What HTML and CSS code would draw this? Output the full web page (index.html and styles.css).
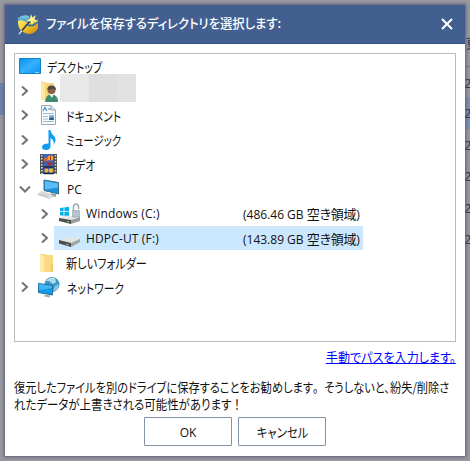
FILE: index.html
```html
<!DOCTYPE html>
<html lang="ja">
<head>
<meta charset="utf-8">
<title>ファイルを保存するディレクトリを選択します</title>
<link rel="stylesheet" href="styles.css">
</head>
<body>
<div class="backdrop">
  <div class="strip-left"></div>
  <div class="strip-right"><span class="peek head">更</span><span class="peek first">2</span><span class="peek lit">2</span><span class="peek">2</span><span class="peek">2</span><span class="peek">2</span><span class="peek">2</span></div>
</div>
<div class="dialog">
  <header class="titlebar">
    <svg class="app-icon" viewBox="0 0 24 24">
      <defs>
        <linearGradient id="gold" x1="0" y1="0" x2="1" y2="1"><stop offset="0" stop-color="#fff276"/><stop offset=".55" stop-color="#f3bd20"/><stop offset="1" stop-color="#bd8411"/></linearGradient>
        <linearGradient id="teal" x1="0" y1="0" x2="0" y2="1"><stop offset="0" stop-color="#7fd3e4"/><stop offset="1" stop-color="#2579b5"/></linearGradient>
      </defs>
      <path d="M2 6Q7 2 13 4L15 12 5 13 2 11Z" fill="url(#teal)"/>
      <path d="M2 9Q7 7 12 11Q18 11 22 7L22 16Q20 21 14 22Q9 22 6 19Q2 17 2 9Z" fill="url(#gold)"/>
      <path d="M12 12Q17 14 22 8L22 11Q17 16 12 14Z" fill="#34779b"/>
      <path d="M3 22L15 8" stroke="#33434a" stroke-width="1.700"/>
      <path d="M3 22L6 18.500" stroke="#e4edf0" stroke-width="1.300"/>
      <path d="M15 2L16.500 5.500 20 3 18.500 7 22 10 17.500 9.500 16 13 14.500 9.500 10 9 14 6.500Z" fill="#fff18b"/>
    </svg>
    <h1 class="title">ファイルを保存するディレクトリを選択します:</h1>
    <svg class="close" viewBox="0 0 12 12"><path d="M1 1L11 11M11 1L1 11"/></svg>
  </header>
  <main class="content">
    <div class="tree">
      <div class="row root">
        <svg class="icon" viewBox="0 0 22 18"><defs><linearGradient id="desk" x1="0" y1="0" x2="1" y2="1"><stop stop-color="#0b91ea"/><stop offset=".5" stop-color="#35b1ff"/><stop offset="1" stop-color="#0796f3"/></linearGradient></defs><path d="M.5 1.5H21.500V16.500H.5Z" fill="url(#desk)" stroke="#1680c6"/><path d="M16 15.500h4" stroke="#95d5ff"/></svg>
        <span class="label t-desktop">デスクトップ</span>
      </div>
      <div class="row">
        <svg class="chevron" viewBox="0 0 10 12"><path d="M2 1.500L7 6 2 10.500"/></svg>
        <svg class="icon" viewBox="0 0 22 22"><path d="M2 1L8 3H15V20H3Z" fill="#f6d47a"/><path d="M2 1L6 4V21L2 19Z" fill="#ffe69a"/><path d="M6 22Q7 14 12 14.500Q19 14 19 22Z" fill="#3c8b72"/><path d="M10 14L13 18 15 14Z" fill="#e7eee8"/><circle cx="12.500" cy="10" r="4" fill="#8a6045"/><path d="M8.500 10Q8 5.500 12.500 5.500T17 10L14 8.500Z" fill="#50483d"/></svg>
        <span class="redacted"></span>
      </div>
      <div class="row">
        <svg class="chevron" viewBox="0 0 10 12"><path d="M2 1.500L7 6 2 10.500"/></svg>
        <svg class="icon" viewBox="0 0 22 22"><path d="M2.500 1.500H12L16.500 6V20.500H2.500Z" fill="#f9fafb" stroke="#a1a8ad"/><path d="M12 1.500V6H16.500" fill="#dce4e8" stroke="#a1a8ad"/><path d="M4 7L6 3.500 8 7M9 5h3" fill="none" stroke="#3e8fc7" stroke-width="1.200"/><path d="M4 9.500h11M4 12.500h5M4 15h5M4 17.500h11" stroke="#9dbdd2"/><path d="M10 11h5v5h-5z" fill="#78b8de"/><path d="M10 16v-1.500l3-1.500 2 1.500V16z" fill="#29648f"/></svg>
        <span class="label t-docs">ドキュメント</span>
      </div>
      <div class="row">
        <svg class="chevron" viewBox="0 0 10 12"><path d="M2 1.500L7 6 2 10.500"/></svg>
        <svg class="icon" viewBox="0 0 22 22"><path d="M9.500 1H11.500Q11.500 4 14.500 6.500Q18.500 10 14.500 16Q15.500 11 11.500 9V17Q11.500 21 7 21Q3 21 3 18Q3 14.500 9.500 14.500Z" fill="#109bf5"/></svg>
        <span class="label t-music">ミュージック</span>
      </div>
      <div class="row">
        <svg class="chevron" viewBox="0 0 10 12"><path d="M2 1.500L7 6 2 10.500"/></svg>
        <svg class="icon" viewBox="0 0 22 22"><path d="M1 1H18V21H1Z" fill="#4c4d50"/><path d="M5 1H14.500V21H5Z" fill="#3f62c0"/><path d="M2.800 2V21M16.500 2V21" stroke="#d5d5d5" stroke-width="1.600" stroke-dasharray="1.500 1.500"/><path d="M5 14H14.500M5 20.500H14.500" stroke="#1b2538" stroke-width="1.300"/><circle cx="11.500" cy="5" r="2.800" fill="#f4ae1f"/><circle cx="7" cy="6.500" r="2" fill="#e48a20"/><path d="M11.500 2v6M7 5v4" stroke="#bd3030"/><path d="M7 9.500h7l-3.500 4z" fill="#b32824"/><circle cx="7.500" cy="17.500" r="2" fill="#f2b523"/><circle cx="12" cy="17.500" r="2.200" fill="#f2b523"/></svg>
        <span class="label t-video">ビデオ</span>
      </div>
      <div class="row">
        <svg class="chevron" viewBox="0 0 12 12"><path d="M1 3.500L6 8.500 11 3.500"/></svg>
        <svg class="icon wide" viewBox="0 0 24 22"><path d="M7 2L21.500 4.500V16L7 12.500Z" fill="#1c92da" stroke="#3c6d8c"/><path d="M8 3.200L21 5.500V9.500L8 11.500Z" fill="#5cbdf5"/><path d="M14 15l-1 3 6 1v-3z" fill="#9ba8b0"/><path d="M4.500 13.500L16 17.500 13 20.500 .5 16.500Z" fill="#e4e7e9" stroke="#aab0b4" stroke-width=".6"/><path d="M4 15.500l8 2.500M3 16.500l8 2.500" stroke="#a5acb1" stroke-width=".5"/></svg>
        <span class="label latin">PC</span>
      </div>
      <div class="row child">
        <svg class="chevron" viewBox="0 0 10 12"><path d="M2 1.500L7 6 2 10.500"/></svg>
        <svg class="icon wide" viewBox="0 0 24 22"><path d="M3 5l3.600-.5v3.800H3zm4.400-.6l4.600-.7v4.600H7.400zM3 9h3.600v3.700L3 12.200zm4.400 0H12v4.500l-4.600-.6z" fill="#00aff0"/><path d="M2 15L9 12.500 23 14 14 17Z" fill="#e5e5e5"/><path d="M2 15L14 17V21L2 18Z" fill="#4d5053"/><path d="M14 17L23 14V18L14 21Z" fill="#9a9c9d"/><path d="M16.500 8V4q0-3 2.500-3T21.500 4v2" fill="none" stroke="#9da9b1" stroke-width="1.500"/><path d="M15.500 7.500h7v6.500h-7z" fill="#b5c4cd" stroke="#83929b" stroke-width=".5"/><path d="M10 18.500l2 .4" stroke="#77e34d"/></svg>
        <span class="cells"><span class="drive">Windows (C:)</span><span class="space">(486.46 GB <span class="kana">空き領域</span>)</span></span>
      </div>
      <div class="row child">
        <svg class="chevron" viewBox="0 0 10 12"><path d="M2 1.500L7 6 2 10.500"/></svg>
        <span class="pick"><svg class="icon wide" viewBox="0 0 24 22"><path d="M2 13L11 10 23 12 14 16Z" fill="#e3e4e4"/><path d="M2 13L14 16V20L2 16.500Z" fill="#4c4e50"/><path d="M14 16L23 12V15L14 20Z" fill="#a1a3a4"/><path d="M9 17l3 .8" stroke="#99a1a4"/></svg>
        <span class="cells"><span class="drive">HDPC-UT (F:)</span><span class="space">(143.89 GB <span class="kana">空き領域</span>)</span></span></span>
      </div>
      <div class="row folder">
        <svg class="icon" viewBox="0 0 22 22"><path d="M1 2H6L8 3H14V20H2Z" fill="#f8da83"/><path d="M1 2L5 4V21L1 19Z" fill="#ffeba7"/><path d="M11.500 12H14V20H11.500Z" fill="#f1cd6c"/></svg>
        <span class="label t-folder">新しいフォルダー</span>
      </div>
      <div class="row">
        <svg class="chevron" viewBox="0 0 10 12"><path d="M2 1.500L7 6 2 10.500"/></svg>
        <svg class="icon wide" viewBox="0 0 24 22"><circle cx="15" cy="8.500" r="7.500" fill="#3e98c6"/><path d="M9 5Q13 0 18 2L19 6 16 8 12 5Z" fill="#b3dceb"/><path d="M18 10l4-2-2 6-4 1z" fill="#8cc8de"/><path d="M1.500 7.500L15.500 9.500V19L1.500 16.500Z" fill="#139bea" stroke="#226d9c"/><path d="M2 8L15 10V12L2 14Z" fill="#45b7f6"/><path d="M8 18.500l5 1v2l-6-1z" fill="#a3aeb5"/></svg>
        <span class="label t-network">ネットワーク</span>
      </div>
    </div>
    <div class="link-line"><a class="path-link">手動でパスを入力します。</a></div>
    <p class="note"><span class="line note-a">復元したファイルを別のドライブに保存することをお勧めします<span class="full">。</span>そうしないと、紛失/削除さ</span><span class="line note-b">れたデータが上書きされる可能性があります<span class="full">！</span></span></p>
    <div class="buttons"><button class="btn latin">OK</button><button class="btn"><span class="t-cancel">キャンセル</span></button></div>
  </main>
</div>
</body>
</html>
```

FILE: styles.css
```css
* { box-sizing: border-box; }
body {
  margin: 0;
  width: 470px;
  height: 461px;
  overflow: hidden;
  padding: 5px;
  background: #98989d;
  color: #111;
  font: 13px/17px "Noto Sans CJK JP", sans-serif;
  font-feature-settings: "palt";
  white-space: nowrap;
}
.backdrop { position: absolute; inset: 0; display: flex; justify-content: space-between; }
.strip-left { width: 5px; margin-top: 83px; height: 32px; background: #6d83a9; }
.strip-right { width: 6px; padding-top: 34px; display: flex; flex-direction: column; }
.peek { height: 31.400px; padding-top: 7px; overflow: hidden; font: 13px/18px "Noto Sans", sans-serif; color: #33343b; }
.peek.head { height: 32px; padding: 0 0 0 2px; font-family: "Noto Sans CJK JP"; }
.peek.first { border-top: 1px solid #77787f; }
.peek.lit { background: #7990b4; }
.dialog {
  position: relative;
  width: 460px;
  height: 451px;
  background: #fff;
  box-shadow: 0 0 3px 1px #5b5d7e;
}
.titlebar {
  height: 39px;
  padding: 0 11px;
  display: flex;
  align-items: center;
  background: #435f8f;
  border-bottom: 1px solid #35517f;
}
.app-icon { width: 24px; height: 24px; }
.title { margin: -3px 0 0 6px; font-size: 13px; font-weight: 500; color: #fff; transform: scaleX(.948); transform-origin: left; }
.close { width: 12px; height: 12px; margin: 0 1px 0 auto; }
.close path { stroke: #fff; stroke-width: 2; fill: none; }
.content { padding: 9px 9px 0; }
.tree { height: 289px; padding: 0 0 0 4px; border: 1px solid #b8bbbc; }
.row { height: 24.550px; display: flex; align-items: center; }
.chevron { width: 12px; height: 12px; flex: none; }
.chevron path { fill: none; stroke: #707274; stroke-width: 2; }
.icon { width: 22px; height: 22px; margin-left: 8px; flex: none; }
.icon.wide { width: 24px; height: 22px; margin-left: 6px; }
.root .icon { height: 18px; margin-left: 0; }
.root .label { margin-left: 6px; }
.folder .icon { margin-left: 20px; }
.label { margin-left: 5px; transform-origin: left; }
.t-desktop { transform: scaleX(.82); }
.t-docs { transform: scaleX(.83); }
.t-music { transform: scaleX(.8); }
.t-video { transform: scaleX(.81); }
.t-folder { transform: scaleX(.86); }
.t-network { transform: scaleX(.83); margin-left: 6px; }
.latin, .drive, .space { font-family: "Open Sans", "Noto Sans CJK JP", sans-serif; font-size: 12px; }
.label.latin { margin-left: 6px; }
.child { padding-left: 20px; }
.pick { display: flex; align-items: center; width: 309px; height: 24px; margin-left: 3px; background: #cce8ff; }
.pick .icon.wide { margin-left: 3px; }
.cells { display: flex; margin-left: 5px; padding-top: 1px; }
.drive { width: 157px; letter-spacing: .15px; }
.kana { font-family: "Noto Sans CJK JP", sans-serif; font-size: 13px; letter-spacing: -.2px; }
.redacted { width: 76px; height: 28px; margin: -5px 0 0 -1px; background: linear-gradient(90deg, #e8e8e8 38%, #dedede 38% 75%, #e2e2e2 75%); }
.link-line { height: 32px; padding-top: 6px; text-align: right; }
.path-link { display: inline-block; color: #00f; text-decoration: underline; transform: scaleX(.93); transform-origin: right; }
.note { margin: 4px 0 0; }
.line { display: block; height: 17px; width: max-content; transform-origin: left; }
.full { font-feature-settings: normal; }
.note-a { transform: scaleX(.864); }
.note-b { transform: scaleX(.88); }
.buttons { display: flex; gap: 6px; margin: 5px 0 0 130px; }
.btn { width: 88px; height: 29px; padding: 0; border: 1px solid #8292a8; border-radius: 1px; background: #fff; color: #111; font-size: 13px; font-family: inherit; font-feature-settings: inherit; }
.btn.latin { font-family: "Open Sans", sans-serif; font-size: 12px; padding-top: 2px; }
.t-cancel { display: inline-block; transform: scaleX(.88); }
```
